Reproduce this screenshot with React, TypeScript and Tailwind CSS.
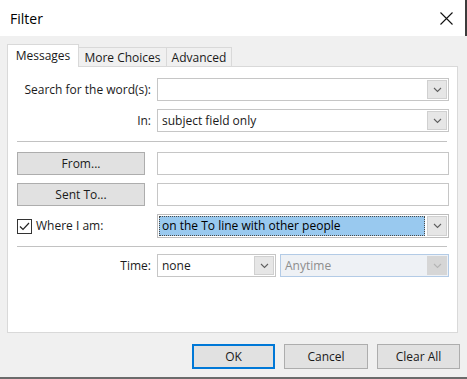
import React from 'react'

const font = { fontFamily: '"Open Sans", "Noto Sans", Arial, sans-serif' }

const Chevron = ({ color = '#606060' }: { color?: string }) => (
  <svg width={9} height={6} viewBox="0 0 9 6">
    <path d="M1 1 L4.5 4.5 L8 1" stroke={color} fill="none" strokeWidth={1.1} />
  </svg>
)

const ArrowBtn = () => (
  <div className="w-[20px] m-px border border-[#d0d0d0] bg-[#e6e6e6] flex items-center justify-center">
    <Chevron />
  </div>
)

const Combo = ({ text }: { text?: string }) => (
  <div className="h-[23px] flex border border-[#c6c6c6] bg-white">
    <div className="flex-1 flex items-center pl-[4px] text-[12px] text-[#1a1a1a]">{text}</div>
    <ArrowBtn />
  </div>
)

const Field = () => <div className="h-[23px] border border-[#c6c6c6] bg-white" />

const PushBtn = ({ label }: { label: string }) => (
  <button className="h-[23px] w-[128px] bg-[#e1e1e1] border border-[#adadad] text-[12px] text-[#1a1a1a]">
    {label}
  </button>
)

const Label = ({ children }: { children: React.ReactNode }) => (
  <div className="flex items-center justify-end text-[12px] text-[#1a1a1a]">{children}</div>
)

export default function App() {
  return (
    <div style={font} className="w-[467px] h-[379px] bg-[#f0f0f0] flex flex-col overflow-hidden">
      {/* Title bar */}
      <div className="h-[36px] bg-white flex items-center justify-between pl-[10px] pr-[12px] border-r-2 border-[#3c3c3c]">
        <span className="text-[14px] text-black">Filter</span>
        <svg width={13} height={13} viewBox="0 0 13 13">
          <path d="M0.5 0.5 L12.5 12.5 M12.5 0.5 L0.5 12.5" stroke="#111" strokeWidth={1.1} />
        </svg>
      </div>

      <div className="px-[7px] pt-[8px] flex flex-col">
        {/* Tabs */}
        <div className="flex items-end h-[23px] relative z-10 -mb-px">
          <div className="h-[23px] w-[72px] bg-white border border-b-0 border-[#d9d9d9] flex items-center justify-center text-[12px] text-[#1a1a1a]">
            Messages
          </div>
          <div className="h-[20px] w-[88px] border border-l-0 border-b-0 border-[#d9d9d9] flex items-center justify-center text-[12px] text-[#1a1a1a]">
            More Choices
          </div>
          <div className="h-[20px] w-[65px] border border-l-0 border-b-0 border-[#d9d9d9] flex items-center justify-center text-[12px] text-[#1a1a1a]">
            Advanced
          </div>
        </div>

        {/* Panel */}
        <div className="h-[267px] w-[451px] bg-white border border-[#d9d9d9] pl-[9px] pr-[8px] pt-[11px]">
          <div className="grid grid-cols-[134px_1fr] gap-x-[6px] gap-y-[8px]">
            <Label>Search for the word(s):</Label>
            <Combo />
            <Label>In:</Label>
            <Combo text="subject field only" />
          </div>

          <div className="mt-[9px] mr-[2px] border-t border-[#c2c2c2]" />

          <div className="mt-[10px] grid grid-cols-[134px_1fr] gap-x-[6px] gap-y-[8px]">
            <PushBtn label="From..." />
            <Field />
            <PushBtn label="Sent To..." />
            <Field />
            <div className="flex items-center gap-[4px] text-[12px] text-[#1a1a1a]">
              <div className="w-[15px] h-[15px] border border-[#333] bg-white flex items-center justify-center">
                <svg width={11} height={9} viewBox="0 0 11 9">
                  <path d="M1 4.5 L4 7.5 L10 1" stroke="#222" fill="none" strokeWidth={1.2} />
                </svg>
              </div>
              Where I am:
            </div>
            <div className="h-[24px] flex border border-[#bdbdbd] bg-white">
              <div className="flex-1 m-px bg-[#99c9ef] border border-dotted border-[#4a4a4a] flex items-center pl-[2px] text-[12px] text-black">
                on the To line with other people
              </div>
              <ArrowBtn />
            </div>
          </div>

          <div className="mt-[8px] mr-[2px] border-t border-[#c2c2c2]" />

          <div className="mt-[7px] grid grid-cols-[134px_119px_1fr] gap-x-[6px]">
            <Label>Time:</Label>
            <Combo text="none" />
            <div className="h-[23px] -ml-[2px] flex border border-[#b3cbe6] bg-[#eef1f5]">
              <div className="flex-1 flex items-center pl-[4px] text-[12px] text-[#8d8d8d]">Anytime</div>
              <div className="w-[20px] m-px bg-[#d6d6d6] flex items-center justify-center">
                <Chevron color="#b5b5b5" />
              </div>
            </div>
          </div>
        </div>

        {/* Footer buttons */}
        <div className="mt-[11px] flex justify-end gap-[9px]">
          <button className="h-[25px] w-[83px] bg-[#e1e1e1] border-2 border-[#0078d7] text-[12px] text-[#1a1a1a]">OK</button>
          <button className="h-[25px] w-[84px] bg-[#e1e1e1] border border-[#adadad] text-[12px] text-[#1a1a1a]">Cancel</button>
          <button className="h-[25px] w-[83px] bg-[#e1e1e1] border border-[#adadad] text-[12px] text-[#1a1a1a]">Clear All</button>
        </div>
      </div>

      <div className="mt-auto h-[2px] bg-[#6b6b6b]" />
    </div>
  )
}
